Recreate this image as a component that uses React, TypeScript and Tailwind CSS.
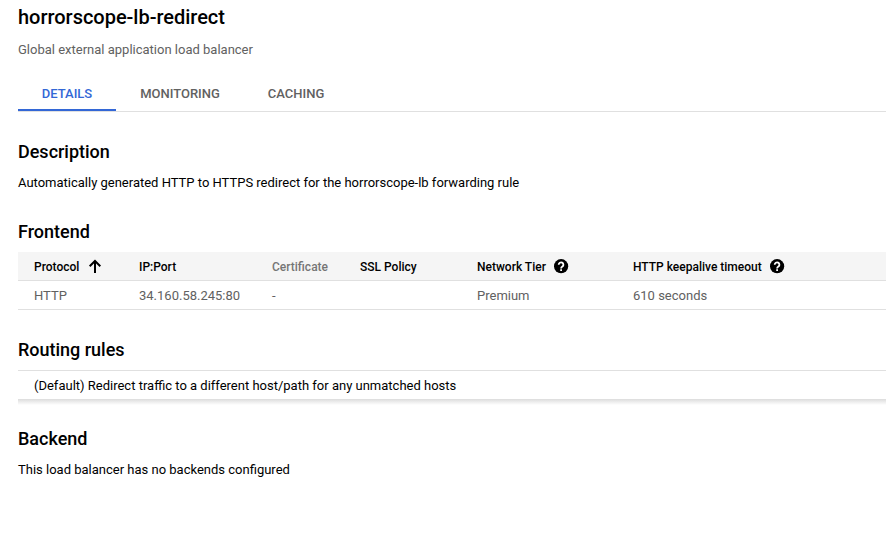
import type { ReactNode } from 'react';

function Help() {
  return (
    <svg className="ml-[7px] size-4 shrink-0 overflow-visible" viewBox="0 0 16 16" fill="none">
      <circle cx="8.100" cy="7.200" r="7.100" fill="#000" />
      <path d="M5.700 5.700a2.350 2.350 0 1 1 3.700 1.900Q8.100 8.500 8.100 9.400" stroke="#fff" strokeWidth="1.800" />
      <path d="M7.200 10.300H9v1.700H7.200z" fill="#fff" />
    </svg>
  );
}

function SortUp() {
  return (
    <svg className="ml-2 size-4 shrink-0" viewBox="0 0 16 16" fill="none" stroke="#000" strokeWidth="2">
      <path d="M8 14V2M2.700 7.300L8 2L13.300 7.300" />
    </svg>
  );
}

const grid = 'grid grid-cols-[105px_133px_88px_117px_156px_1fr] items-center pl-4 pt-px border-b border-[#e0e0e0]';

function Heading({ children }: { children: ReactNode }) {
  return <h2 className="text-[18px] leading-6 font-medium tracking-[-0.01px]">{children}</h2>;
}

export default function App() {
  return (
    <main className="h-[552px] w-[886px] overflow-hidden bg-white pl-[18px] font-['Roboto',sans-serif] text-[13px] leading-5 text-black">
      <h1 className="pt-[5px] text-[20px] leading-6 font-medium tracking-[-0.02px]">horrorscope-lb-redirect</h1>
      <p className="mt-[11px] text-[#616161]">Global external application load balancer</p>
      <nav className="mt-[17px] flex h-[35px] border-b border-[#e0e0e0] font-medium text-[#616161]">
        <a className="h-[34px] w-[98px] border-b-2 border-[#3367d6] pt-[7px] text-center text-[#3367d6]">DETAILS</a>
        <a className="w-32 pt-[7px] text-center">MONITORING</a>
        <a className="w-[104px] pt-[7px] text-center">CACHING</a>
      </nav>
      <section className="mt-7">
        <Heading>Description</Heading>
        <p className="mt-[9px] tracking-[-0.005px]">Automatically generated HTTP to HTTPS redirect for the horrorscope-lb forwarding rule</p>
      </section>
      <section className="mt-[27px]">
        <Heading>Frontend</Heading>
        <div className="mt-2">
          <div className={`${grid} h-[29px] bg-[#f5f5f5] text-[12px] font-medium`}>
            <div className="flex items-center pt-px">Protocol<SortUp /></div>
            <div className="pt-px">IP:Port</div>
            <div className="pt-px text-[#757575]">Certificate</div>
            <div className="pt-px">SSL Policy</div>
            <div className="flex items-center pt-px">Network Tier<Help /></div>
            <div className="flex items-center pt-px">HTTP keepalive timeout<Help /></div>
          </div>
          <div className={`${grid} h-[29px] text-[#616161]`}>
            <div className="pt-px">HTTP</div>
            <div className="pt-px">34.160.58.245:80</div>
            <div className="pt-px">-</div>
            <div />
            <div className="pt-px">Premium</div>
            <div className="pt-px">610 seconds</div>
          </div>
        </div>
      </section>
      <section className="mt-7">
        <Heading>Routing rules</Heading>
        <div className="mt-2 h-[29px] border-t border-[#e0e0e0] pt-[5px] pl-4">
          (Default) Redirect traffic to a different host/path for any unmatched hosts
        </div>
        <div className="h-[6px] bg-linear-to-b from-[#dcdcdc] to-white" />
      </section>
      <section className="mt-[22px]">
        <Heading>Backend</Heading>
        <p className="mt-[9px]">This load balancer has no backends configured</p>
      </section>
    </main>
  );
}
